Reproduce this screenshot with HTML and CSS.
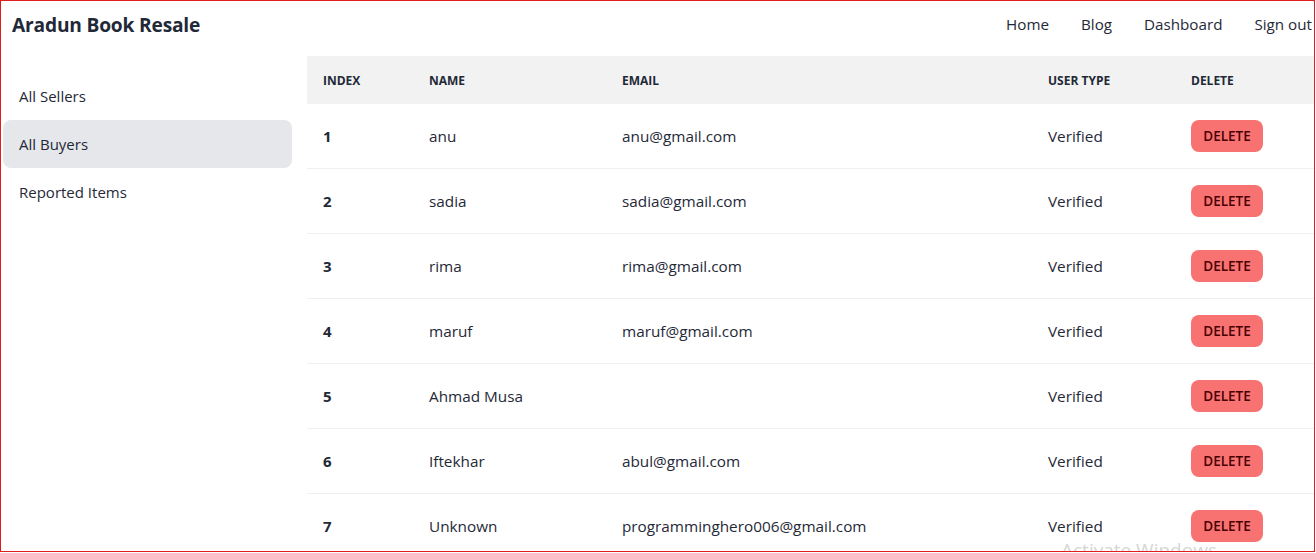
FILE: index.html
```html
<!DOCTYPE html>
<html>
<head>
<meta charset="utf-8">
<link rel="stylesheet" href="styles.css">
</head>
<body>
<div class="frame">
  <header class="navbar">
    <a class="brand">Aradun Book Resale</a>
    <nav class="links">
      <a>Home</a>
      <a>Blog</a>
      <a>Dashboard</a>
      <a>Sign out</a>
    </nav>
  </header>
  <div class="layout">
    <aside class="sidebar">
      <ul class="menu">
        <li>All Sellers</li>
        <li class="active">All Buyers</li>
        <li>Reported Items</li>
      </ul>
    </aside>
    <main class="content">
      <table class="table">
        <colgroup>
          <col class="c1"><col class="c2"><col class="c3"><col class="c4"><col class="c5">
        </colgroup>
        <thead>
          <tr><th>Index</th><th>Name</th><th>Email</th><th>User Type</th><th>Delete</th></tr>
        </thead>
        <tbody>
          <tr><td class="idx">1</td><td>anu</td><td>anu@gmail.com</td><td>Verified</td><td><button class="btn-del">Delete</button></td></tr>
          <tr><td class="idx">2</td><td>sadia</td><td>sadia@gmail.com</td><td>Verified</td><td><button class="btn-del">Delete</button></td></tr>
          <tr><td class="idx">3</td><td>rima</td><td>rima@gmail.com</td><td>Verified</td><td><button class="btn-del">Delete</button></td></tr>
          <tr><td class="idx">4</td><td>maruf</td><td>maruf@gmail.com</td><td>Verified</td><td><button class="btn-del">Delete</button></td></tr>
          <tr><td class="idx">5</td><td>Ahmad Musa</td><td></td><td>Verified</td><td><button class="btn-del">Delete</button></td></tr>
          <tr><td class="idx">6</td><td>Iftekhar</td><td>abul@gmail.com</td><td>Verified</td><td><button class="btn-del">Delete</button></td></tr>
          <tr><td class="idx">7</td><td>Unknown</td><td>programminghero006@gmail.com</td><td>Verified</td><td><button class="btn-del">Delete</button></td></tr>
        </tbody>
      </table>
    </main>
  </div>
  <div class="watermark">Activate Windows</div>
</div>
</body>
</html>
```
FILE: styles.css
```css
* { box-sizing: border-box; }
html, body { margin: 0; padding: 0; background: #fff; }
body {
  font-family: "Open Sans", "Noto Sans", sans-serif;
  color: #1f2937;
  font-size: 16px;
}
.frame {
  position: relative;
  width: 1315px;
  height: 552px;
  border: 1px solid #e11d1d;
  overflow: hidden;
  background: #fff;
}
.navbar {
  height: 55px;
  display: flex;
  align-items: center;
  justify-content: space-between;
  padding: 0 0 9px 11px;
}
.brand {
  font-size: 19.2px;
  font-weight: 700;
  color: #1f2937;
  letter-spacing: -0.2px;
}
.links {
  display: flex;
  align-items: center;
}
.links a {
  font-size: 15.2px;
  padding: 0 16px;
  color: #1f2937;
}
.links a:last-child { padding-right: 2px; }
.layout {
  display: flex;
}
.sidebar {
  width: 306px;
  flex: none;
  padding: 16px 15px 0 2px;
}
.menu {
  list-style: none;
  margin: 0;
  padding: 0;
}
.menu li {
  height: 48px;
  display: flex;
  align-items: center;
  padding-left: 16px;
  font-size: 15px;
  border-radius: 8px;
  color: #1f2937;
}
.menu li.active { background: #e5e7eb; }
.content {
  flex: 1;
  min-width: 0;
}
.table {
  width: 100%;
  border-collapse: separate;
  border-spacing: 0;
  table-layout: fixed;
}
.c1 { width: 106px; }
.c2 { width: 193px; }
.c3 { width: 426px; }
.c4 { width: 143px; }
.table th {
  background: #f2f2f2;
  height: 48px;
  text-align: left;
  font-size: 12px;
  font-weight: 700;
  text-transform: uppercase;
  padding: 0 16px;
  color: #1f2937;
}
.table td {
  height: 65px;
  padding: 0 16px;
  font-size: 15.3px;
  border-bottom: 1px solid #efefef;
  white-space: nowrap;
}
.table td.idx { font-weight: 700; font-size: 15px; }
.btn-del {
  width: 72px;
  height: 32px;
  border: none;
  border-radius: 8px;
  background: #f87272;
  color: #470000;
  font-family: inherit;
  font-size: 13.5px;
  font-weight: 600;
  text-transform: uppercase;
  padding: 0;
}
.watermark {
  position: absolute;
  left: 1060px;
  top: 536px;
  font-size: 19px;
  color: #d6d6d6;
  white-space: nowrap;
}
```
